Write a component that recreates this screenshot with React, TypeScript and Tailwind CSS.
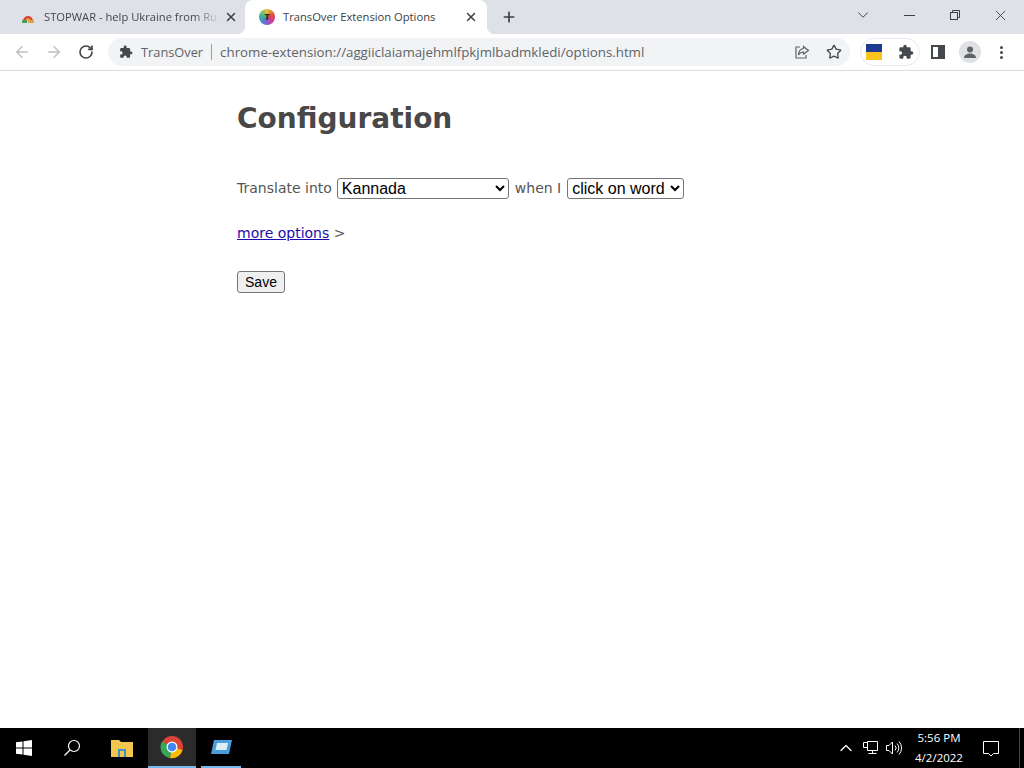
import { FC } from 'react';
import { ArrowLeft, ArrowRight, RotateCw, Star, X, Plus, ChevronDown, ChevronUp } from 'lucide-react';

const PuzzleFill: FC<{ size?: number; className?: string }> = ({ size = 16, className = '' }) => (
  <svg width={size} height={size} viewBox="0 0 24 24" className={className} fill="currentColor">
    <path d="M20.5 11H19V7a2 2 0 0 0-2-2h-4V3.5a2.5 2.5 0 0 0-5 0V5H4a2 2 0 0 0-2 2v3.8h1.5a2.7 2.7 0 0 1 0 5.4H2V20a2 2 0 0 0 2 2h3.8v-1.5a2.7 2.7 0 0 1 5.4 0V22H17a2 2 0 0 0 2-2v-4h1.5a2.5 2.5 0 0 0 0-5z" />
  </svg>
);

const TabStrip: FC = () => (
  <div className="h-[34px] bg-[#dee1e6] flex items-end pl-2 text-[11.2px] text-[#45474a]">
    {/* Inactive tab */}
    <div className="w-[237px] h-[26px] flex items-center pl-3 pr-[7px] mb-1">
      <svg width="16" height="16" viewBox="0 0 16 16" className="shrink-0">
        <path d="M3 12a5 5 0 0 1 10 0z" fill="#d8453a" />
        <path d="M5.500 12a2.500 2.500 0 0 1 5 0z" fill="#e9b93c" />
        <rect x="2" y="11" width="5" height="3" fill="#4a9a5c" />
        <rect x="8" y="11" width="6" height="3" fill="#e0a63c" />
      </svg>
      <span className="ml-2 w-[176px] overflow-hidden whitespace-nowrap [mask-image:linear-gradient(to_right,black_85%,transparent)]">
        STOPWAR - help Ukraine from Russia
      </span>
      <X size={14} strokeWidth={2.5} className="ml-auto text-[#3c4043]" />
    </div>
    {/* Active tab */}
    <div className="relative w-[242px] h-[34px] bg-white rounded-t-lg flex items-center pl-[14px] pr-[9px] text-[#3c4043]">
      <span className="absolute bottom-0 -left-2 w-2 h-2 bg-[radial-gradient(circle_at_top_left,transparent_8px,white_8.5px)]" />
      <span className="absolute bottom-0 -right-2 w-2 h-2 bg-[radial-gradient(circle_at_top_right,transparent_8px,white_8.5px)]" />
      <div className="w-4 h-4 shrink-0 rounded-full bg-[conic-gradient(#e7c33c,#e0463f,#c33fb0,#4a7fd6,#3fb88c,#e7c33c)] flex items-center justify-center text-[9px] font-bold text-[#222]">
        T
      </div>
      <span className="ml-2 whitespace-nowrap">TransOver Extension Options</span>
      <X size={14} strokeWidth={2.5} className="ml-auto text-[#3c4043]" />
    </div>
    <Plus size={16} strokeWidth={2.5} className="ml-[14px] mb-[9px] text-[#3c4043]" />
    {/* Window controls */}
    <div className="ml-auto flex items-center self-start h-[30px] text-[#3c4043]">
      <ChevronDown size={18} strokeWidth={1.25} className="mr-[32px]" />
      <div className="w-[11px] h-px bg-[#3c4043] mr-[34px]" />
      <svg width="12" height="12" viewBox="0 0 12 12" fill="none" stroke="currentColor" className="mr-[31px]">
        <rect x="1.5" y="3.5" width="7" height="7" />
        <path d="M3.500 3.500v-2h7v7h-2" />
      </svg>
      <X size={17} strokeWidth={1.25} className="mr-[15px]" />
    </div>
  </div>
);

const Toolbar: FC = () => (
  <div className="h-[37px] bg-white border-b border-[#dadce0] flex items-center pl-[13px] text-[#5f6368]">
    <ArrowLeft size={18} strokeWidth={2} className="text-[#bcc0c4]" />
    <ArrowRight size={18} strokeWidth={2} className="ml-[14px] text-[#bcc0c4]" />
    <RotateCw size={16} strokeWidth={2.5} className="ml-[15px] text-[#45484c]" />
    {/* Omnibox */}
    <div className="ml-[14px] w-[742px] h-[28px] bg-[#f1f3f4] rounded-full flex items-center pl-[11px] pr-2">
      <PuzzleFill size={14} className="text-[#45484c]" />
      <span className="ml-2 text-[#5f6368] text-[12.8px] pt-px">TransOver</span>
      <span className="w-px h-4 bg-[#9aa0a6] mx-2" />
      <span className="text-[#5f6368] text-[13.3px] pt-px whitespace-nowrap">chrome-extension://aggiiclaiamajehmlfpkjmlbadmkledi/options.html</span>
      <svg width="16" height="16" viewBox="0 0 16 16" fill="none" stroke="#5f6368" strokeWidth="1.2" className="ml-auto">
        <path d="M6 3H2v11h10v-3" />
        <path d="M9.500 2.500 14.500 6.500 9.500 10V8C7 8 5.500 9 4.500 11c0-3.500 2-6 5-6.500z" />
      </svg>
      <Star size={16} strokeWidth={2} className="ml-4 text-[#45484c]" />
    </div>
    {/* Extensions pill */}
    <div className="ml-[10px] w-[60px] h-[28px] rounded-full border border-[#e8eaed] flex items-center pl-[5px]">
      <div className="w-4 h-4 flex flex-col">
        <div className="h-2 bg-[#1f3a93]" />
        <div className="h-2 bg-[#f7c51e]" />
      </div>
      <PuzzleFill size={16} className="ml-4 text-[#45484c]" />
    </div>
    <div className="ml-[11px] w-[14px] h-[14px] border-2 border-[#45484c] flex justify-end">
      <div className="w-[5px] bg-[#45484c]" />
    </div>
    <div className="ml-[14px] w-[22px] h-[22px] rounded-full bg-[#dfe1e5] flex items-center justify-center">
      <svg width="14" height="14" viewBox="0 0 14 14" fill="#5f6368">
        <circle cx="7" cy="4.500" r="3" />
        <path d="M1 13c0-3 3-4.500 6-4.500s6 1.500 6 4.500z" />
      </svg>
    </div>
    <div className="ml-[19px] flex flex-col gap-[2px]">
      <div className="w-[3px] h-[3px] rounded-full bg-[#45484c]" />
      <div className="w-[3px] h-[3px] rounded-full bg-[#45484c]" />
      <div className="w-[3px] h-[3px] rounded-full bg-[#45484c]" />
    </div>
  </div>
);

const Options: FC = () => (
  <main className="flex-1 bg-white pl-[237px] font-['DejaVu_Sans',sans-serif] text-[#555] text-[14px]">
    <h1 className="mt-[30px] text-[28px] leading-[36px] font-bold text-[#484848]">Configuration</h1>
    <div className="mt-[40px] h-[22px] flex items-center">
      <span>Translate into</span>
      <select defaultValue="Kannada" className="ml-[5px] w-[172px] h-[21px] appearance-auto bg-white border border-[#767676] rounded-[3px] text-black text-[16px] font-['Liberation_Sans',sans-serif]">
        <option>Kannada</option>
      </select>
      <span className="ml-[6px]">when I</span>
      <select defaultValue="click on word" className="ml-[6px] w-[117px] h-[21px] appearance-auto bg-white border border-[#767676] rounded-[3px] text-black text-[16px] font-['Liberation_Sans',sans-serif]">
        <option>click on word</option>
      </select>
    </div>
    <p className="mt-[25px] leading-[18px]">
      <a href="#" className="text-[#1a0dab] underline">more options</a> &gt;
    </p>
    <button className="block mt-[29px] w-[48px] h-[22px] bg-[#efefef] border border-[#767676] rounded-[3px] text-black text-[14px] font-['Liberation_Sans',sans-serif]">
      Save
    </button>
  </main>
);

const Taskbar: FC = () => (
  <div className="h-10 bg-black flex items-stretch text-white">
    <div className="w-12 flex items-center justify-center">
      <svg width="16" height="16" viewBox="0 0 16 16" fill="white">
        <path d="M0 2.300 6.500 1.400V7.500H0zM7.500 1.300 16 0V7.500H7.500zM0 8.500H6.500V14.600L0 13.700zM7.500 8.500H16V16L7.500 14.700z" />
      </svg>
    </div>
    <div className="w-[48px] flex items-center justify-center">
      <svg width="18" height="18" viewBox="0 0 18 18" fill="none" stroke="white" strokeWidth="1.2">
        <circle cx="11" cy="7" r="5.500" />
        <path d="M7 11 1.500 16.500" />
      </svg>
    </div>
    <div className="w-[52px] flex items-center justify-center">
      <svg width="22" height="18" viewBox="0 0 22 18">
        <path d="M0 1h8l2 2h12v15H0z" fill="#f3c64f" />
        <rect x="7" y="10" width="8" height="8" fill="#3f8fc9" />
        <rect x="9" y="12" width="4" height="6" fill="#f3c64f" />
      </svg>
    </div>
    <div className="w-[48px] bg-[#2b2b2b] border-b-2 border-[#76b9ed] flex items-center justify-center">
      <svg width="24" height="24" viewBox="0 0 24 24">
        <circle cx="12" cy="12" r="11" fill="#db4437" />
        <path d="M12 12 22.500 15A11 11 0 0 1 10 23z" fill="#fbbc05" />
        <path d="M12 12 10 23A11 11 0 0 1 2 6.500z" fill="#34a853" />
        <circle cx="12" cy="12" r="5.500" fill="white" />
        <circle cx="12" cy="12" r="4.300" fill="#4285f4" />
      </svg>
    </div>
    <div className="ml-[5px] w-10 border-b-2 border-[#76b9ed] flex items-center justify-center">
      <svg width="22" height="16" viewBox="0 0 22 16">
        <path d="M4 1h18l-3 14H1z" fill="#4a9fd8" />
        <path d="M7 4h11l-1.500 7H5.500z" fill="#dceefa" />
      </svg>
    </div>
    {/* System tray */}
    <div className="ml-auto flex items-center">
      <ChevronUp size={20} strokeWidth={1.5} />
      <svg width="17" height="16" viewBox="0 0 17 16" fill="none" stroke="white" className="ml-[6px]">
        <path d="M5.500 2.500H1.500v5h4M5.500 1.500h10v9h-10zM10.500 10.500v3M6.500 13.500h8" />
      </svg>
      <svg width="17" height="16" viewBox="0 0 17 16" fill="none" stroke="white" className="ml-[6px]">
        <path d="M1.500 5.500h2.500l3.500-3.500v12L4 10.500H1.500zM10 5.500a3.500 3.500 0 0 1 0 5M12 3.500a6.500 6.500 0 0 1 0 9M14 1.500a9.500 9.500 0 0 1 0 13" />
      </svg>
      <div className="w-[56px] ml-[9px] text-[11.5px] leading-[20px] text-center whitespace-nowrap">
        <div>5:56 PM</div>
        <div>4/2/2022</div>
      </div>
      <div className="w-[48px] flex items-center justify-center">
        <svg width="18" height="18" viewBox="0 0 18 18" fill="none" stroke="white">
          <path d="M1.500 2.500h15v12h-5l-2.500 2.500-2.500-2.500h-5z" />
        </svg>
      </div>
      <div className="ml-1 w-[5px] h-full border-l border-[#444]" />
    </div>
  </div>
);

export default function App() {
  return (
    <div className="h-[768px] flex flex-col overflow-hidden font-['Open_Sans',sans-serif]">
      <TabStrip />
      <Toolbar />
      <Options />
      <Taskbar />
    </div>
  );
}
